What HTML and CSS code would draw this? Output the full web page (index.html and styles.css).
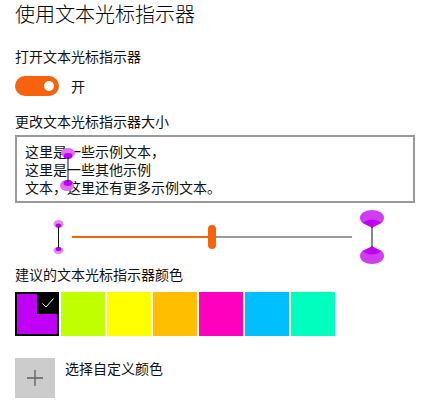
FILE: index.html
```html
<!DOCTYPE html>
<html lang="zh-CN">
<head>
<meta charset="utf-8">
<title>使用文本光标指示器</title>
<link rel="stylesheet" href="styles.css">
</head>
<body>
<main class="page">
  <h1 class="title">使用文本光标指示器</h1>
  <p class="label first">打开文本光标指示器</p>
  <div class="toggle-row">
    <span class="toggle"><span class="knob"></span></span>
    <span class="toggle-text">开</span>
  </div>
  <p class="label size-label">更改文本光标指示器大小</p>
  <div class="sample">
    <p>这里是一些示例文本，</p>
    <p>这里是一些其他示例</p>
    <p>文本，这里还有更多示例文本。</p>
    <svg class="sample-cursor" width="26" height="44" viewBox="0 0 26 44">
      <ellipse cx="12" cy="5" rx="7" ry="5" fill="#e070f0"/>
      <ellipse cx="12" cy="8" rx="4.500" ry="3" fill="#bf00f5"/>
      <ellipse cx="11" cy="37.500" rx="7" ry="5.500" fill="#e070f0"/>
      <ellipse cx="12" cy="35" rx="4.500" ry="3" fill="#bf00f5"/>
      <rect x="11.500" y="9" width="1" height="25" fill="#111"/>
    </svg>
  </div>
  <div class="slider-row">
    <svg class="small-cursor" width="12" height="34" viewBox="0 0 12 34">
      <ellipse cx="6.500" cy="4" rx="5" ry="4" fill="#e28af2"/>
      <ellipse cx="6.500" cy="5.500" rx="2.800" ry="2" fill="#b800e8"/>
      <ellipse cx="6.500" cy="30.500" rx="5" ry="3.500" fill="#e28af2"/>
      <ellipse cx="6.500" cy="29" rx="2.800" ry="2" fill="#b800e8"/>
      <rect x="6" y="7" width="1" height="21" fill="#111"/>
    </svg>
    <div class="track">
      <span class="track-fill"></span>
      <span class="thumb"></span>
      <span class="track-rest"></span>
    </div>
    <svg class="large-cursor" width="26" height="54" viewBox="0 0 26 54">
      <ellipse cx="13" cy="8" rx="12" ry="8" fill="#cf3cf2"/>
      <path d="M4 12.500 Q13 6.500 22 12.500 L13 18 Z" fill="#bf00f5"/>
      <ellipse cx="13" cy="46" rx="12" ry="8" fill="#cf3cf2"/>
      <path d="M4 41.500 L13 36 L22 41.500 Q13 47.500 4 41.500 Z" fill="#bf00f5"/>
      <rect x="12.500" y="17" width="1" height="20" fill="#111"/>
    </svg>
  </div>
  <p class="label color-label">建议的文本光标指示器颜色</p>
  <div class="swatches">
    <span class="swatch selected">
      <span class="check-box">
        <svg width="14" height="12" viewBox="0 0 14 12"><path d="M1.500 6.500 L5 10 L12.500 1.500" fill="none" stroke="#fff" stroke-width="1"/></svg>
      </span>
    </span>
    <span class="swatch lime"></span>
    <span class="swatch yellow"></span>
    <span class="swatch amber"></span>
    <span class="swatch pink"></span>
    <span class="swatch sky"></span>
    <span class="swatch mint"></span>
  </div>
  <div class="custom-row">
    <span class="plus-tile">
      <svg width="16" height="16" viewBox="0 0 16 16"><path d="M8 0 V16 M0 8 H16" stroke="#5f5f5f" stroke-width="1.300" fill="none"/></svg>
    </span>
    <span class="custom-text">选择自定义颜色</span>
  </div>
</main>
</body>
</html>
```
FILE: styles.css
```css
* { box-sizing: border-box; }
html, body { margin: 0; padding: 0; background: #fff; }
body {
  width: 433px;
  height: 406px;
  overflow: hidden;
  color: #111;
  font-family: "Noto Sans CJK SC", "Noto Sans", sans-serif;
  font-size: 14px;
}
.page { padding: 0 15px; }
p, h1 { margin: 0; font-weight: 400; }
.title { font-size: 20px; line-height: 28px; height: 28px; font-weight: 300; color: #000; }
.label { line-height: 20px; height: 20px; }
.first { margin-top: 18px; }
.toggle-row { display: flex; align-items: center; margin-top: 10px; height: 20px; }
.toggle {
  width: 44px;
  height: 20px;
  border-radius: 10px;
  background: #f7630c;
  display: flex;
  align-items: center;
  justify-content: flex-end;
  padding-right: 5px;
}
.knob { width: 10px; height: 10px; border-radius: 50%; background: #fff; }
.toggle-text { margin-left: 12px; }
.size-label { margin-top: 15px; }
.sample {
  position: relative;
  width: 400px;
  height: 68px;
  margin-top: 4px;
  border: 2px solid #999;
  padding: 5px 8px 0;
  line-height: 18px;
}
.sample-cursor { position: absolute; left: 39px; top: 11px; }
.slider-row { display: flex; align-items: center; height: 54px; margin-top: 7px; margin-left: 37px; }
.small-cursor { flex: none; }
.track { display: flex; align-items: center; margin-left: 8px; width: 280px; height: 24px; }
.track-fill { height: 2px; width: 136px; background: #f7630c; }
.thumb { width: 8px; height: 24px; border-radius: 4px; background: #f7630c; flex: none; }
.track-rest { height: 2px; flex: 1; background: #999; }
.large-cursor { flex: none; margin-left: 7px; }
.color-label { margin-top: 0; }
.swatches { display: flex; gap: 2px; margin-top: 8px; }
.swatch { width: 44px; height: 44px; display: block; }
.selected { position: relative; background: #bf00f5; border: 2px solid #000; }
.check-box {
  position: absolute;
  top: -2px;
  right: -2px;
  width: 22px;
  height: 22px;
  background: #000;
  display: flex;
  align-items: center;
  justify-content: center;
}
.lime { background: #bfff00; }
.yellow { background: #ffff00; }
.amber { background: #ffbf00; }
.pink { background: #ff00bf; }
.sky { background: #00bfff; }
.mint { background: #00ffbf; }
.custom-row { display: flex; margin-top: 22px; }
.plus-tile {
  width: 40px;
  height: 40px;
  background: #ccc;
  display: flex;
  align-items: center;
  justify-content: center;
}
.custom-text { margin-left: 10px; line-height: 20px; }
```
